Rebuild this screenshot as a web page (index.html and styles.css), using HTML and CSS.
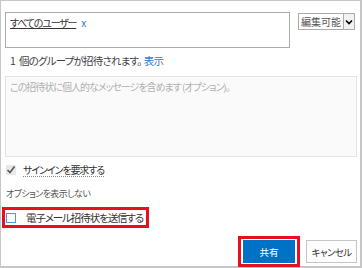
FILE: index.html
```html
<!DOCTYPE html>
<html lang="ja">
<head>
    <meta charset="UTF-8">
    <title>共有</title>
    <link rel="stylesheet" href="styles.css">
</head>
<body>
    <div class="dialog">
        <div class="top">
            <div class="people">
                <span class="user">すべてのユーザー</span><span class="remove">x</span>
            </div>
            <div class="perm">
                <span class="perm-text">編集可能</span>
                <span class="perm-arrow">
                    <svg width="8" height="6" viewBox="0 0 8 6"><path d="M1 1.5 L4 4.5 L7 1.5" fill="none" stroke="#000" stroke-width="1.6"/></svg>
                </span>
            </div>
        </div>

        <p class="count"><span class="num">1</span>個のグループが招待されます。<a href="#">表示</a></p>

        <div class="message">この招待状に個人的なメッセージを含めます (オプション)。</div>

        <div class="signin">
            <span class="check checked">
                <svg width="10" height="10" viewBox="0 0 10 10"><path d="M1.5 5 L4 7.5 L8.5 1.5" fill="none" stroke="#555" stroke-width="1.6"/></svg>
            </span>
            <span class="signin-text">サインインを要求する</span>
        </div>

        <p class="options">オプションを表示しない</p>

        <div class="email">
            <span class="check blue"></span>
            <span class="email-text">電子メール招待状を送信する</span>
        </div>

        <div class="buttons">
            <div class="mark">
                <button class="share">共有</button>
            </div>
            <button class="cancel">キャンセル</button>
        </div>
    </div>
</body>
</html>
```

FILE: styles.css
```css
body {
    margin: 0;
    font-family: "Noto Sans CJK JP", "Noto Sans", sans-serif;
    font-feature-settings: "palt";
    color: #444;
}
.dialog {
    width: 362px;
    height: 268px;
    box-sizing: border-box;
    border: 1px solid #c6c6c6;
    border-width: 1px 2px 2px 1px;
}
.top {
    display: flex;
    align-items: flex-start;
    margin-top: 11px;
    margin-left: 4px;
}
.people {
    width: 285px;
    height: 36px;
    box-sizing: border-box;
    border: 1px solid #ababab;
    padding: 3px 4px;
    font-size: 10px;
    line-height: 14px;
    letter-spacing: -1.2px;
}
.user {
    color: #333;
    text-decoration: underline;
}
.remove {
    color: #2a7ad2;
    margin-left: 5px;
}
.perm {
    display: flex;
    margin-left: 8px;
    margin-top: 1px;
    height: 15px;
    border: 1px solid #ababab;
    font-size: 10px;
    line-height: 15px;
}
.perm-text {
    padding: 0 2px;
    color: #555;
}
.perm-arrow {
    width: 10px;
    display: flex;
    align-items: center;
    justify-content: center;
    border-left: 1px solid #ababab;
    background: #f2f2f2;
}
.count {
    margin: 5px 0 0 9px;
    font-size: 10.5px;
    line-height: 16px;
    letter-spacing: -0.8px;
}
.num {
    margin-right: 4px;
}
.count a {
    color: #2a7ad2;
    text-decoration: none;
    margin-left: 2px;
}
.message {
    margin: 7px 0 0 4px;
    width: 352px;
    height: 81px;
    box-sizing: border-box;
    border: 1px solid #e3e3e3;
    background: #fafafa;
    padding: 2px 4px;
    font-size: 10px;
    line-height: 16px;
    letter-spacing: -1px;
    color: #b0b0b0;
}
.signin {
    display: flex;
    align-items: center;
    margin: 6px 0 0 5px;
    height: 14px;
}
.check {
    width: 10px;
    height: 10px;
    box-sizing: border-box;
    display: flex;
    align-items: center;
    justify-content: center;
    flex: none;
}
.check.checked {
    background: #e8e8e8;
}
.signin-text {
    margin-left: 7px;
    font-size: 10px;
    color: #333;
    border-bottom: 1px dotted #888;
    line-height: 13px;
    letter-spacing: -1.1px;
}
.options {
    margin: 11px 0 0 5px;
    font-size: 9px;
    line-height: 12px;
    color: #555;
    letter-spacing: -0.6px;
}
.email {
    display: flex;
    align-items: center;
    margin: 7px 0 0 1px;
    width: 147px;
    height: 21px;
    box-sizing: border-box;
    border: 3px solid #e8101f;
}
.check.blue {
    margin-left: 1px;
    border: 1px solid #4a9ad8;
    background: #fff;
}
.email-text {
    margin-left: 10px;
    font-size: 10.5px;
    color: #333;
    white-space: nowrap;
    letter-spacing: -1.1px;
}
.buttons {
    display: flex;
    justify-content: flex-end;
    align-items: flex-start;
    gap: 6px;
    margin: 8px 3px 0 0;
}
.mark {
    border: 3px solid #e8101f;
    padding: 1px 2px;
    display: flex;
}
button {
    font-family: inherit;
    font-feature-settings: "palt";
    font-size: 9.5px;
    height: 23px;
    padding: 0;
    cursor: pointer;
}
.share {
    width: 52px;
    border: none;
    background: #0072c6;
    color: #fff;
}
.cancel {
    width: 51px;
    margin-top: 4px;
    border: 1px solid #c6c6c6;
    background: #fdfdfd;
    color: #333;
    letter-spacing: -0.6px;
}
```
